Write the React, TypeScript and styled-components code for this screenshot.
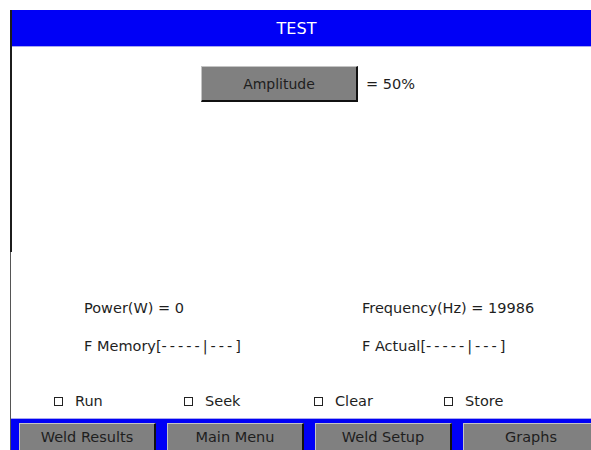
import styled, { createGlobalStyle } from "styled-components";

const GlobalStyle = createGlobalStyle`
  html, body {
    margin: 0;
    padding: 0;
    background: #fff;
    font-family: "DejaVu Sans", Tahoma, sans-serif;
    overflow: hidden;
  }
`;

const Page = styled.div`
  width: 591px;
  height: 450px;
  padding: 10px 0 0 10px;
  box-sizing: border-box;
  display: flex;
  flex-direction: column;
`;

const Upper = styled.div`
  border-left: 2px solid #1c1c1c;
  height: 242px;
  display: flex;
  flex-direction: column;
`;

const Lower = styled.div`
  border-left: 1px solid #555;
  flex: 1;
  display: flex;
  flex-direction: column;
`;

const TitleBar = styled.div`
  height: 36px;
  background: #0000f6;
  border-bottom: 1px solid #a8a8f0;
  color: #fff;
  font-size: 16px;
  display: flex;
  align-items: center;
  justify-content: center;
  padding-right: 10px;
`;

const AmpRow = styled.div`
  display: flex;
  align-items: center;
  margin: 19px 0 0 189px;
  gap: 8px;
`;

const GreyButton = styled.div<{ $w: number }>`
  width: ${(p) => p.$w}px;
  height: 36px;
  box-sizing: border-box;
  background: #808080;
  border-top: 1px solid #c4c4c4;
  border-left: 1px solid #c4c4c4;
  border-right: 2px solid #111;
  border-bottom: 2px solid #111;
  color: #1e1e1e;
  font-size: 14px;
  display: flex;
  align-items: center;
  justify-content: center;
  flex-shrink: 0;
`;

const Value = styled.span`
  font-size: 14.5px;
  color: #1e1e1e;
`;

const Readings = styled.div`
  display: grid;
  grid-template-columns: 278px 1fr;
  row-gap: 20px;
  padding: 47px 0 0 73px;
  font-size: 14.5px;
  color: #1e1e1e;
`;

const Reading = styled.div`
  height: 18px;
  line-height: 18px;
  white-space: nowrap;
`;

const Scale = styled.span`
  letter-spacing: 3px;
`;

const Checks = styled.div`
  display: grid;
  grid-template-columns: repeat(4, 130px);
  padding: 37px 0 0 43px;
  font-size: 14.5px;
  color: #1e1e1e;
`;

const Check = styled.div`
  display: flex;
  align-items: center;
  gap: 12px;
  height: 18px;
`;

const Box = styled.span`
  width: 7px;
  height: 7px;
  border: 1px solid #222;
  display: inline-block;
`;

const BottomBar = styled.div`
  margin-top: auto;
  height: 31px;
  background: #0000f6;
  border-top: 1px solid #a8a8f0;
  display: flex;
  align-items: flex-end;
  gap: 11px;
  padding-left: 8px;
  overflow: hidden;
`;

const NavButton = styled(GreyButton)`
  height: 27px;
  border-bottom: none;
  font-size: 14.5px;
`;

export default function App() {
  return (
    <>
      <GlobalStyle />
      <Page>
        <Upper>
          <TitleBar>TEST</TitleBar>
          <AmpRow>
            <GreyButton $w={157}>Amplitude</GreyButton>
            <Value>= 50%</Value>
          </AmpRow>
        </Upper>
        <Lower>
          <Readings>
            <Reading>Power(W) = 0</Reading>
            <Reading>Frequency(Hz) = 19986</Reading>
            <Reading>
              F Memory[<Scale>-----|---</Scale>]
            </Reading>
            <Reading>
              F Actual[<Scale>-----|---</Scale>]
            </Reading>
          </Readings>
          <Checks>
            {["Run", "Seek", "Clear", "Store"].map((l) => (
              <Check key={l}>
                <Box />
                {l}
              </Check>
            ))}
          </Checks>
          <BottomBar>
            {["Weld Results", "Main Menu", "Weld Setup", "Graphs"].map((l) => (
              <NavButton key={l} $w={137}>
                {l}
              </NavButton>
            ))}
          </BottomBar>
        </Lower>
      </Page>
    </>
  );
}
